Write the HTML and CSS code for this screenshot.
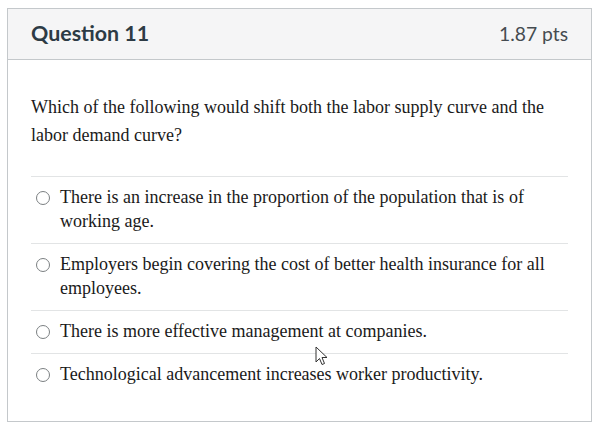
FILE: index.html
```html
<!DOCTYPE html>
<html>
<head>
<meta charset="utf-8">
<link rel="stylesheet" href="styles.css">
</head>
<body>
<div class="card">
  <div class="header">
    <span class="title">Question 11</span>
    <span class="pts">1.87 pts</span>
  </div>
  <div class="content">
    <p class="question">Which of the following would shift both the labor supply curve and the labor demand curve?</p>
    <div class="answers">
      <label class="answer"><span class="radio"></span><span class="text">There is an increase in the proportion of the population that is of working age.</span></label>
      <label class="answer"><span class="radio"></span><span class="text">Employers begin covering the cost of better health insurance for all employees.</span></label>
      <label class="answer"><span class="radio"></span><span class="text">There is more effective management at companies.</span></label>
      <label class="answer"><span class="radio"></span><span class="text">Technological advancement increases worker productivity.</span></label>
    </div>
  </div>
</div>
<svg class="cursor" width="14" height="22" viewBox="0 0 14 22"><path d="M1 1 L1 16 L4.5 12.5 L7 18.5 L9.5 17.5 L7 11.5 L12 11.5 Z" fill="#fff" stroke="#333" stroke-width="1"/></svg>
</body>
</html>
```
FILE: styles.css
```css
body {
  margin: 0;
  background: #fff;
  position: relative;
}
.card {
  margin: 8px 0 0 7px;
  width: 583px;
  border: 1px solid #c4c8cb;
  background: #fff;
}
.header {
  height: 50px;
  background: #f5f5f6;
  border-bottom: 1px solid #c4c8cb;
  display: flex;
  align-items: center;
  justify-content: space-between;
  padding: 0 23px;
  font-family: Lato, "Liberation Sans", sans-serif;
}
.title {
  font-size: 21.4px;
  font-weight: 700;
  color: #2d3b45;
  margin-top: -2px;
}
.pts {
  font-size: 19.3px;
  color: #454b50;
  margin-top: -2px;
}
.content {
  padding: 33px 23px 25px;
  font-family: "Liberation Serif", serif;
  font-size: 18px;
  color: #1a1a1a;
}
.question {
  margin: 0 0 27px;
  line-height: 28px;
}
.answer {
  display: flex;
  align-items: flex-start;
  border-top: 1px solid #e2e4e5;
  padding: 8px 0 10px 5px;
  line-height: 24px;
}
.radio {
  flex: none;
  width: 12px;
  height: 12px;
  border: 1px solid #7b7f82;
  border-radius: 50%;
  margin: 6px 10px 0 0;
}
.cursor {
  position: absolute;
  left: 315px;
  top: 346px;
}
```
